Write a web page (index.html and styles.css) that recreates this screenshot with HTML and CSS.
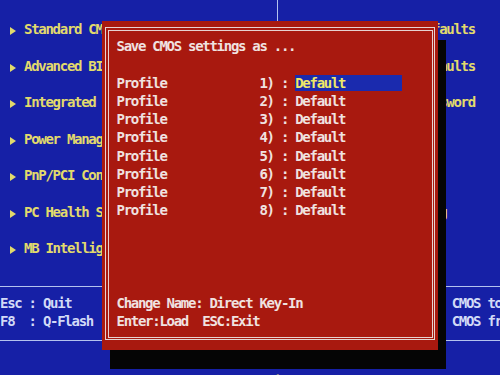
FILE: index.html
```html
<!DOCTYPE html>
<html>
<head>
<meta charset="utf-8">
<link rel="stylesheet" href="styles.css">
</head>
<body>
<div class="screen">
  <div class="menu">
    <div class="col col-left">
      <div class="item"><span class="arrow"></span>Standard CMOS Features</div>
      <div class="item"><span class="arrow"></span>Advanced BIOS Features</div>
      <div class="item"><span class="arrow"></span>Integrated Peripherals</div>
      <div class="item"><span class="arrow"></span>Power Management Setup</div>
      <div class="item"><span class="arrow"></span>PnP/PCI Configurations</div>
      <div class="item"><span class="arrow"></span>PC Health Status</div>
      <div class="item"><span class="arrow"></span>MB Intelligent Tweaker(M.I.T.)</div>
    </div>
    <div class="col col-right">
      <div class="item"><span class="arrow"></span>Load Fail-Safe Defaults</div>
      <div class="item"><span class="arrow"></span>Load Optimized Defaults</div>
      <div class="item"><span class="arrow"></span>Set Supervisor Password</div>
      <div class="item"><span class="arrow"></span>Set User Password</div>
      <div class="item"><span class="arrow"></span>Save &amp; Exit Setup</div>
      <div class="item"><span class="arrow"></span>Exit Without Saving</div>
    </div>
  </div>

  <div class="keys">
    <div class="keys-left">
      <div class="line">Esc : Quit      &#8593;&#8595;&#8594;&#8592;: Select Item</div>
      <div class="line">F8  : Q-Flash   F10 : Save &amp; Exit Setup</div>
    </div>
    <div class="keys-right">
      <div class="line">F11 : Save CMOS to BIOS</div>
      <div class="line">F12 : Load CMOS from BIOS</div>
    </div>
  </div>

  <div class="help">Change Field  Data</div>

  <div class="dialog">
    <div class="frame-outer">
      <div class="frame-inner">
        <div class="row">Save CMOS settings as ...</div>
        <div class="row"> </div>
        <div class="profiles">
          <div class="row">Profile             1) : <span class="val selected">Default        </span></div>
          <div class="row">Profile             2) : <span class="val">Default</span></div>
          <div class="row">Profile             3) : <span class="val">Default</span></div>
          <div class="row">Profile             4) : <span class="val">Default</span></div>
          <div class="row">Profile             5) : <span class="val">Default</span></div>
          <div class="row">Profile             6) : <span class="val">Default</span></div>
          <div class="row">Profile             7) : <span class="val">Default</span></div>
          <div class="row">Profile             8) : <span class="val">Default</span></div>
        </div>
        <div class="d-help">
          <div class="row">Change Name: Direct Key-In</div>
          <div class="row">Enter:Load  ESC:Exit</div>
        </div>
      </div>
    </div>
  </div>
</div>
</body>
</html>
```

FILE: styles.css
```css
html, body {
  margin: 0;
  padding: 0;
}

body {
  width: 500px;
  height: 375px;
  overflow: hidden;
  background: #1620a6;
}

.screen {
  position: relative;
  width: 500px;
  height: 375px;
  overflow: hidden;
  background: #1620a6;
  font-family: "DejaVu Sans Mono", "Liberation Mono", monospace;
  font-size: 14px;
  font-weight: bold;
  letter-spacing: -1.28px;
  line-height: 18.25px;
  color: #e2da6c;
}

.item,
.line,
.row,
.help {
  white-space: pre;
}

/* ---------- main menu ---------- */
.menu {
  display: grid;
  grid-template-columns: 278px 1fr;
  height: 275px;
}

.col {
  padding-top: 20px;
  overflow: hidden;
}

.col-left {
  padding-left: 9px;
  border-right: 1.5px solid #b4c2ee;
}

.col-right {
  padding-left: 17.5px;
}

.item {
  height: 36.5px;
}

.arrow {
  display: inline-block;
  width: 0;
  height: 0;
  border-left: 6px solid #e2da6c;
  border-top: 4.5px solid transparent;
  border-bottom: 4.5px solid transparent;
  margin-left: 1px;
  margin-right: 8px;
  vertical-align: -1px;
}

/* ---------- key legend ---------- */
.keys {
  margin-top: 10.5px;
  border-top: 1.5px solid #b4c2ee;
  border-bottom: 1.5px solid #b4c2ee;
  padding-top: 7.5px;
  padding-bottom: 9px;
  display: grid;
  grid-template-columns: 373px 1fr;
  color: #d2daf6;
}

.keys-left,
.keys-right {
  overflow: hidden;
}

.help {
  margin-top: 31px;
  padding-left: 216px;
}

/* ---------- dialog ---------- */
.dialog {
  position: absolute;
  left: 102px;
  top: 21px;
  width: 336px;
  height: 329px;
  box-sizing: border-box;
  padding: 6px 3px 10px 3px;
  background: #a8190f;
  box-shadow: 8px 19px 0 #050505;
  color: #f0e2e0;
}

.frame-outer {
  height: 100%;
  box-sizing: border-box;
  border: 1px solid #e6d2d0;
  padding: 1.5px;
}

.frame-inner {
  height: 100%;
  box-sizing: border-box;
  border: 1px solid #e6d2d0;
  padding: 6.5px 0 0 8px;
}

.row {
  height: 18.25px;
}

.val.selected {
  background: #1a2aae;
  color: #f0e866;
}

.d-help {
  margin-top: 74.5px;
}
```
